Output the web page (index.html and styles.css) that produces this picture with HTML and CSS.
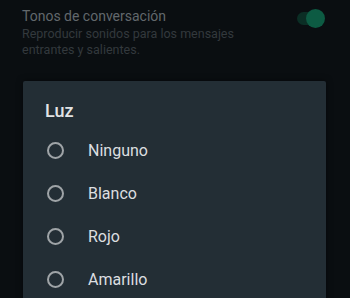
FILE: index.html
```html
<!DOCTYPE html>
<html lang="es">
<head>
    <meta charset="UTF-8">
    <meta name="viewport" content="width=device-width, initial-scale=1.0">
    <title>Notificaciones - Luz</title>
    <link rel="stylesheet" href="styles.css">
</head>
<body>
    <div class="screen">
        <!-- Ajuste de fondo -->
        <div class="setting">
            <div class="setting-text">
                <div class="setting-title">Tonos de conversación</div>
                <div class="setting-sub">Reproducir sonidos para los mensajes entrantes y salientes.</div>
            </div>
            <div class="switch"><div class="switch-thumb"></div></div>
        </div>

        <!-- Diálogo -->
        <div class="dialog">
            <div class="dialog-title">Luz</div>
            <div class="option"><span class="radio"></span><span class="option-label">Ninguno</span></div>
            <div class="option"><span class="radio"></span><span class="option-label">Blanco</span></div>
            <div class="option"><span class="radio"></span><span class="option-label">Rojo</span></div>
            <div class="option"><span class="radio"></span><span class="option-label">Amarillo</span></div>
        </div>
    </div>
</body>
</html>
```

FILE: styles.css
```css
body {
    margin: 0;
    padding: 0;
    background-color: #0a0e11;
    font-family: Roboto, 'Noto Sans', sans-serif;
    overflow: hidden;
}

.screen {
    position: relative;
    width: 350px;
    height: 298px;
    overflow: hidden;
}

.setting {
    display: flex;
    align-items: flex-start;
    padding: 7px 0 0 22px;
}

.setting-text {
    width: 240px;
}

.setting-title {
    font-size: 14px;
    line-height: 19px;
    color: #62686c;
}

.setting-sub {
    font-size: 12.5px;
    line-height: 15.5px;
    color: #33393d;
}

.switch {
    position: relative;
    width: 26px;
    height: 13px;
    margin: 5px 0 0 35px;
    border-radius: 7px;
    background-color: #0b2e25;
}

.switch-thumb {
    position: absolute;
    top: -3px;
    right: -2px;
    width: 19px;
    height: 19px;
    border-radius: 50%;
    background-color: #0d5b43;
}

.dialog {
    position: absolute;
    top: 81px;
    left: 23px;
    width: 303px;
    height: 240px;
    padding-top: 18px;
    background-color: #232e35;
    border-radius: 2px;
    box-shadow: 0 0 6px rgba(0, 0, 0, 0.5);
}

.dialog-title {
    padding-left: 22px;
    font-size: 18px;
    font-weight: 500;
    line-height: 24px;
    color: #e1e3e4;
    margin-bottom: 6px;
}

.option {
    display: flex;
    align-items: center;
    height: 43px;
    padding-left: 24px;
}

.radio {
    width: 13px;
    height: 13px;
    border: 2px solid #9fa4a7;
    border-radius: 50%;
}

.option-label {
    margin-left: 24px;
    font-size: 16px;
    color: #dcdfe0;
}
```
